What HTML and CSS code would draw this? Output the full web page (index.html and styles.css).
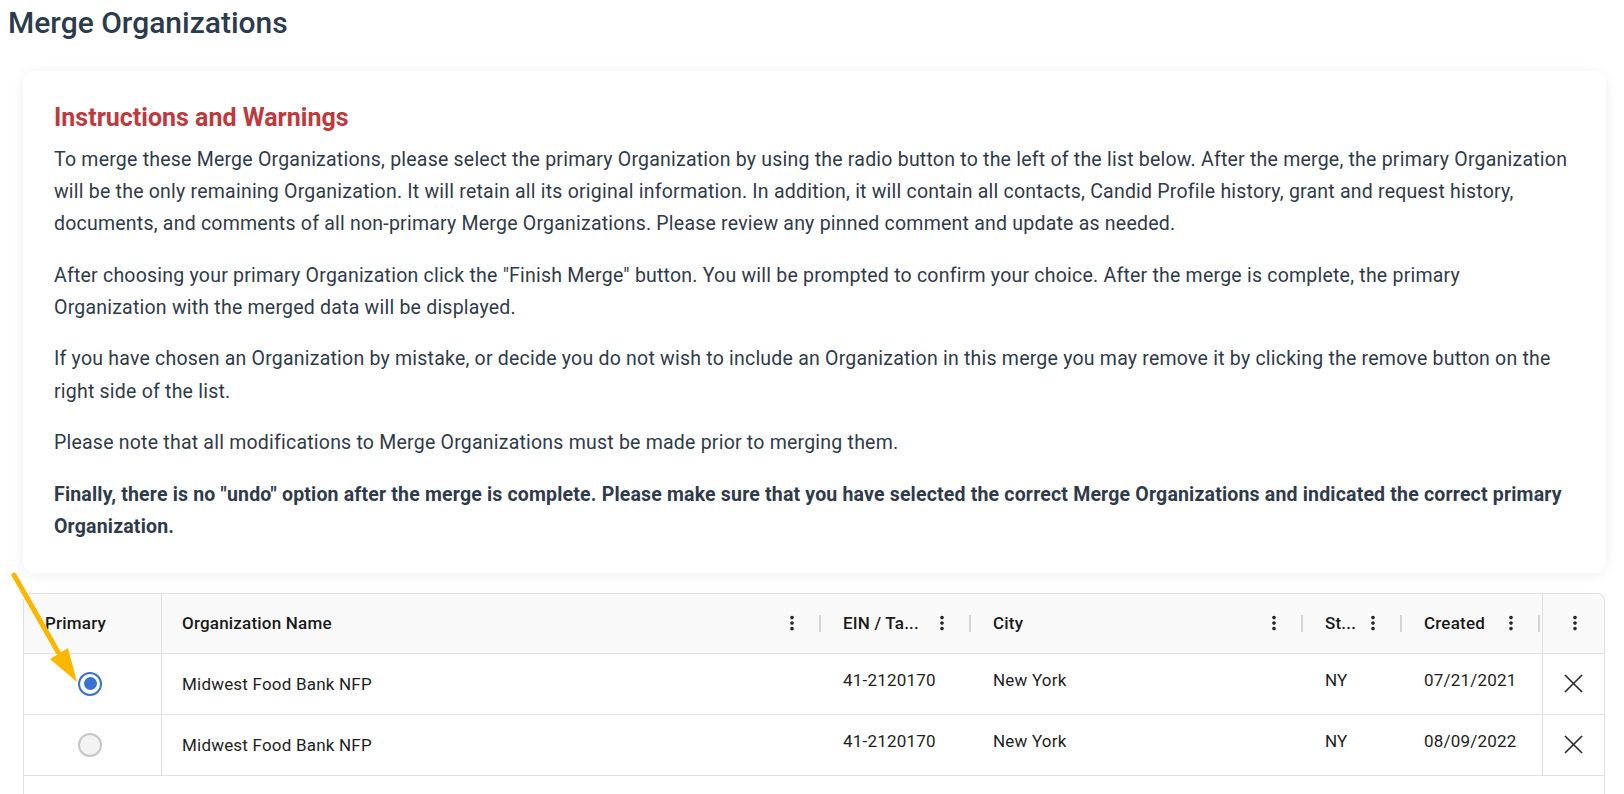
FILE: index.html
```html
<!DOCTYPE html>
<html lang="en">
<head>
    <meta charset="UTF-8">
    <meta name="viewport" content="width=device-width, initial-scale=1.0">
    <title>Merge Organizations</title>
    <link rel="stylesheet" href="styles.css">
</head>
<body>
    <div class="page">
        <h1 class="page-title">Merge Organizations</h1>

        <div class="card">
            <h2 class="card-title">Instructions and Warnings</h2>
            <p>To merge these Merge Organizations, please select the primary Organization by using the radio button to the left of the list below. After the merge, the primary Organization will be the only remaining Organization. It will retain all its original information. In addition, it will contain all contacts, Candid Profile history, grant and request history, documents, and comments of all non-primary Merge Organizations. Please review any pinned comment and update as needed.</p>
            <p>After choosing your primary Organization click the "Finish Merge" button. You will be prompted to confirm your choice. After the merge is complete, the primary Organization with the merged data will be displayed.</p>
            <p>If you have chosen an Organization by mistake, or decide you do not wish to include an Organization in this merge you may remove it by clicking the remove button on the right side of the list.</p>
            <p>Please note that all modifications to Merge Organizations must be made prior to merging them.</p>
            <p class="strong">Finally, there is no "undo" option after the merge is complete. Please make sure that you have selected the correct Merge Organizations and indicated the correct primary Organization.</p>
        </div>

        <div class="grid-wrap">
            <div class="grid">
                <div class="row head">
                    <div class="cell c-primary">Primary</div>
                    <div class="cell c-name">
                        <span class="label">Organization Name</span>
                        <svg class="kebab" viewBox="0 0 24 24"><path d="M12 8c1.1 0 2-.9 2-2s-.9-2-2-2-2 .9-2 2 .9 2 2 2zm0 2c-1.1 0-2 .9-2 2s.9 2 2 2 2-.9 2-2-.9-2-2-2zm0 6c-1.1 0-2 .9-2 2s.9 2 2 2 2-.9 2-2-.9-2-2-2z"/></svg>
                        <span class="sep"></span>
                    </div>
                    <div class="cell c-ein">
                        <span class="label">EIN / Ta...</span>
                        <svg class="kebab" viewBox="0 0 24 24"><path d="M12 8c1.1 0 2-.9 2-2s-.9-2-2-2-2 .9-2 2 .9 2 2 2zm0 2c-1.1 0-2 .9-2 2s.9 2 2 2 2-.9 2-2-.9-2-2-2zm0 6c-1.1 0-2 .9-2 2s.9 2 2 2 2-.9 2-2-.9-2-2-2z"/></svg>
                        <span class="sep"></span>
                    </div>
                    <div class="cell c-city">
                        <span class="label">City</span>
                        <svg class="kebab" viewBox="0 0 24 24"><path d="M12 8c1.1 0 2-.9 2-2s-.9-2-2-2-2 .9-2 2 .9 2 2 2zm0 2c-1.1 0-2 .9-2 2s.9 2 2 2 2-.9 2-2-.9-2-2-2zm0 6c-1.1 0-2 .9-2 2s.9 2 2 2 2-.9 2-2-.9-2-2-2z"/></svg>
                        <span class="sep"></span>
                    </div>
                    <div class="cell c-state">
                        <span class="label">St...</span>
                        <svg class="kebab" viewBox="0 0 24 24"><path d="M12 8c1.1 0 2-.9 2-2s-.9-2-2-2-2 .9-2 2 .9 2 2 2zm0 2c-1.1 0-2 .9-2 2s.9 2 2 2 2-.9 2-2-.9-2-2-2zm0 6c-1.1 0-2 .9-2 2s.9 2 2 2 2-.9 2-2-.9-2-2-2z"/></svg>
                        <span class="sep"></span>
                    </div>
                    <div class="cell c-created">
                        <span class="label">Created</span>
                        <svg class="kebab" viewBox="0 0 24 24"><path d="M12 8c1.1 0 2-.9 2-2s-.9-2-2-2-2 .9-2 2 .9 2 2 2zm0 2c-1.1 0-2 .9-2 2s.9 2 2 2 2-.9 2-2-.9-2-2-2zm0 6c-1.1 0-2 .9-2 2s.9 2 2 2 2-.9 2-2-.9-2-2-2z"/></svg>
                        <span class="sep"></span>
                    </div>
                    <div class="cell c-actions">
                        <svg class="kebab" viewBox="0 0 24 24"><path d="M12 8c1.1 0 2-.9 2-2s-.9-2-2-2-2 .9-2 2 .9 2 2 2zm0 2c-1.1 0-2 .9-2 2s.9 2 2 2 2-.9 2-2-.9-2-2-2zm0 6c-1.1 0-2 .9-2 2s.9 2 2 2 2-.9 2-2-.9-2-2-2z"/></svg>
                    </div>
                </div>

                <div class="row">
                    <div class="cell c-primary"><span class="radio checked"></span></div>
                    <div class="cell c-name">Midwest Food Bank NFP</div>
                    <div class="cell c-ein top">41-2120170</div>
                    <div class="cell c-city top">New York</div>
                    <div class="cell c-state top">NY</div>
                    <div class="cell c-created top">07/21/2021</div>
                    <div class="cell c-actions">
                        <svg class="close" viewBox="0 0 20 20"><path d="M1 1 19 19M19 1 1 19"/></svg>
                    </div>
                </div>

                <div class="row">
                    <div class="cell c-primary"><span class="radio"></span></div>
                    <div class="cell c-name">Midwest Food Bank NFP</div>
                    <div class="cell c-ein top">41-2120170</div>
                    <div class="cell c-city top">New York</div>
                    <div class="cell c-state top">NY</div>
                    <div class="cell c-created top">08/09/2022</div>
                    <div class="cell c-actions">
                        <svg class="close" viewBox="0 0 20 20"><path d="M1 1 19 19M19 1 1 19"/></svg>
                    </div>
                </div>

                <div class="filler"></div>
            </div>

            <!-- annotation arrow pointing at the selected radio -->
            <svg class="arrow" width="90" height="120" viewBox="0 0 90 120">
                <path class="arrow-shaft" d="M6 5 L50 82"/>
                <path class="arrow-head" d="M42 89 L60 78 L69 112 Z"/>
            </svg>
        </div>
    </div>
</body>
</html>
```

FILE: styles.css
```css
body {
    margin: 8px;
    font-family: Roboto, "Liberation Sans", Arial, sans-serif;
    color: #2f3a4a;
    background: #fff;
}
.page-title {
    margin: -2px 0 0 0;
    font-size: 30px;
    font-weight: 500;
    line-height: 34px;
    color: #2b3a4c;
}
.card {
    margin: 31px 10px 0 15px;
    padding: 32px 35px 30px 31px;
    background: #fff;
    border-radius: 12px;
    box-shadow: 0 2px 14px rgba(0, 0, 0, 0.07);
}
.card-title {
    margin: 0 0 12px 0;
    font-size: 25px;
    line-height: 29px;
    font-weight: 700;
    color: #c0393c;
}
.card p {
    margin: 0 0 19.5px 0;
    font-size: 19.5px;
    letter-spacing: 0.22px;
    line-height: 32.1px;
    color: #2f3a4a;
}
.card p:last-child {
    margin-bottom: 0;
}
.card p.strong {
    font-weight: 700;
    letter-spacing: 0.18px;
}

/* data grid */
.grid-wrap {
    position: relative;
    margin: 20px 11px 0 15px;
}
.grid {
    border: 1px solid #e0e0e0;
    border-bottom: none;
    border-radius: 8px 8px 0 0;
    overflow: hidden;
    color: #1e1e1e;
    font-size: 17px;
    letter-spacing: 0.2px;
}
.row {
    display: grid;
    grid-template-columns: 138px 661px 150px 332px 99px 138px 62px;
    border-bottom: 1px solid #e0e0e0;
    height: 60px;
}
.row.head {
    background: #f9f9f9;
    height: 59px;
    font-weight: 500;
    color: #1a1a1a;
}
.cell {
    display: flex;
    align-items: center;
    padding-left: 20px;
    min-width: 0;
}
.cell.top {
    align-items: flex-start;
    padding-top: 16px;
    box-sizing: border-box;
}
.head .cell {
    padding-right: 2px;
}
.label {
    white-space: nowrap;
}
.kebab {
    width: 22px;
    height: 22px;
    margin-left: auto;
    margin-right: 16px;
    fill: #2a2a2a;
    flex: none;
}
.sep {
    width: 2px;
    height: 17px;
    background: #d4d4d4;
    flex: none;
}
.c-primary {
    border-right: 1px solid #e0e0e0;
    padding-left: 21px;
}
.row:not(.head) .c-primary {
    justify-content: center;
    padding-left: 0;
    padding-right: 5px;
}
.c-actions {
    border-left: 1px solid #e0e0e0;
    justify-content: center;
    padding-left: 4px;
}
.c-actions .kebab {
    margin: 0;
}
.row:not(.head) .c-actions {
    padding-left: 0;
}
.close {
    width: 19px;
    height: 19px;
    stroke: #2a2a2a;
    stroke-width: 1.7;
    fill: none;
}
.radio {
    width: 24px;
    height: 24px;
    box-sizing: border-box;
    border-radius: 50%;
    border: 2px solid #c6c6c6;
    background: #f3f3f3;
}
.radio.checked {
    border-color: #3a72d0;
    background: #fff;
    display: flex;
    align-items: center;
    justify-content: center;
}
.radio.checked::after {
    content: "";
    width: 13px;
    height: 13px;
    border-radius: 50%;
    background: #3a72d0;
}
.filler {
    height: 70px;
}

.arrow {
    position: absolute;
    left: -15px;
    top: -23px;
    pointer-events: none;
}
.arrow-shaft {
    stroke: #f9b700;
    stroke-width: 5;
    stroke-linecap: round;
    fill: none;
}
.arrow-head {
    fill: #f9b700;
}
```
